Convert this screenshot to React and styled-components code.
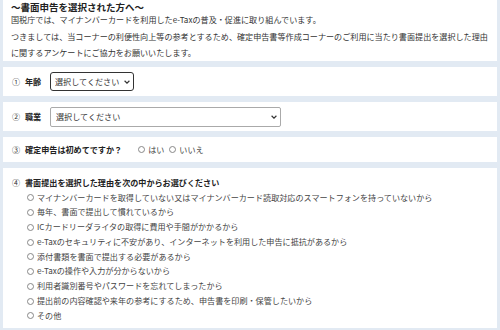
import React from 'react'
import styled, { createGlobalStyle } from 'styled-components'

const GlobalStyle = createGlobalStyle`
	html, body {
		margin: 0;
		padding: 0;
	}
	body {
		background: #e2eaf3;
		font-family: "Noto Sans CJK JP", "Noto Sans", sans-serif;
		color: #333;
	}
`

const reasons = [
	'マイナンバーカードを取得していない又はマイナンバーカード読取対応のスマートフォンを持っていないから',
	'毎年、書面で提出して慣れているから',
	'ICカードリーダライタの取得に費用や手間がかかるから',
	'e-Taxのセキュリティに不安があり、インターネットを利用した申告に抵抗があるから',
	'添付書類を書面で提出する必要があるから',
	'e-Taxの操作や入力が分からないから',
	'利用者識別番号やパスワードを忘れてしまったから',
	'提出前の内容確認や来年の参考にするため、申告書を印刷・保管したいから',
	'その他',
]

function Chevron() {
	return (
		<svg width='6' height='4' viewBox='0 0 6 4'>
			<path d='M0.6 0.8 L3 3.1 L5.4 0.8' fill='none' stroke='#333' strokeWidth='1.2' />
		</svg>
	)
}

function Select({ width, focused }) {
	return (
		<SelectWrap $width={width}>
			<SelectBox $focused={focused} defaultValue=''>
				<option value=''>選択してください</option>
			</SelectBox>
			<Arrow>
				<Chevron />
			</Arrow>
		</SelectWrap>
	)
}

function App() {
	return (
		<>
			<GlobalStyle />
			<Page>
				<Intro>
					<Title>～書面申告を選択された方へ～</Title>
					<Body>
						国税庁では、マイナンバーカードを利用したe-Taxの普及・促進に取り組んでいます。
						<br />
						つきましては、当コーナーの利便性向上等の参考とするため、確定申告書等作成コーナーのご利用に当たり書面提出を選択した理由
						<br />
						に関するアンケートにご協力をお願いいたします。
					</Body>
				</Intro>

				<Row $h={29}>
					<Num>①</Num>
					<Label>年齢</Label>
					<Select width={84} focused />
				</Row>

				<Row $h={29}>
					<Num>②</Num>
					<Label>職業</Label>
					<Select width={231} />
				</Row>

				<Row $h={25}>
					<Num>③</Num>
					<Question>確定申告は初めてですか？</Question>
					<Choice>
						<Radio type='radio' name='first' />
						はい
					</Choice>
					<Choice>
						<Radio type='radio' name='first' />
						いいえ
					</Choice>
				</Row>

				<Reasons>
					<ReasonTitle>
						<Num>④</Num>
						<Question>書面提出を選択した理由を次の中からお選びください</Question>
					</ReasonTitle>
					{reasons.map((r) => (
						<Option key={r}>
							<Radio type='radio' name='reason' />
							{r}
						</Option>
					))}
				</Reasons>
			</Page>
		</>
	)
}

const Page = styled.div`
	width: 500px;
	height: 330px;
	overflow: hidden;
	box-sizing: border-box;
	padding: 0 3px;
	display: flex;
	flex-direction: column;
	gap: 6px;
`

const Intro = styled.section`
	background: #fff;
	height: 61px;
	flex-shrink: 0;
	box-sizing: border-box;
	padding: 1px 8px 0;
`

const Title = styled.h1`
	margin: 0;
	font-size: 9.5px;
	line-height: 12px;
	font-weight: bold;
	color: #222;
`

const Body = styled.p`
	margin: -1px 0 0;
	font-size: 8.1px;
	line-height: 16.5px;
`

const Row = styled.section`
	background: #fff;
	height: ${(props) => props.$h}px;
	flex-shrink: 0;
	box-sizing: border-box;
	padding-left: 9px;
	display: flex;
	align-items: center;
	font-size: 8.1px;
`

const Num = styled.span`
	width: 13px;
	flex-shrink: 0;
	font-size: 8.1px;
`

const Label = styled.span`
	width: 25px;
	font-weight: bold;
	color: #222;
`

const Question = styled.span`
	font-weight: bold;
	color: #222;
	margin-right: 16px;
`

const SelectWrap = styled.span`
	position: relative;
	display: inline-flex;
	width: ${(props) => props.$width}px;
`

const SelectBox = styled.select`
	appearance: none;
	width: 100%;
	box-sizing: border-box;
	height: ${(props) => (props.$focused ? 19 : 20)}px;
	padding: 0 0 0 ${(props) => (props.$focused ? 4 : 5)}px;
	border: ${(props) => (props.$focused ? '1.5px solid #333' : '1px solid #aaa')};
	border-radius: ${(props) => (props.$focused ? 3 : 2)}px;
	background: #fff;
	font-family: inherit;
	font-size: 8.1px;
	color: #333;
	outline: none;
`

const Arrow = styled.span`
	position: absolute;
	right: 4px;
	top: 50%;
	transform: translateY(-50%);
	display: flex;
	pointer-events: none;
`

const Choice = styled.label`
	display: inline-flex;
	align-items: center;
	margin-right: 5px;
	color: #444;
`

const Radio = styled.input`
	appearance: none;
	width: 7px;
	height: 7px;
	margin: 0 3px 0 0;
	border: 1px solid #888;
	border-radius: 50%;
	background: #fff;
	box-sizing: border-box;
`

const Reasons = styled.section`
	background: #fff;
	height: 160px;
	flex-shrink: 0;
	box-sizing: border-box;
	padding: 5.5px 0 0 9px;
	font-size: 8.1px;
`

const ReasonTitle = styled.div`
	display: flex;
	align-items: center;
	line-height: 17px;
`

const Option = styled.label`
	display: flex;
	align-items: center;
	padding-left: 15px;
	line-height: 14.75px;
	color: #444;
	white-space: nowrap;
`

export default App
